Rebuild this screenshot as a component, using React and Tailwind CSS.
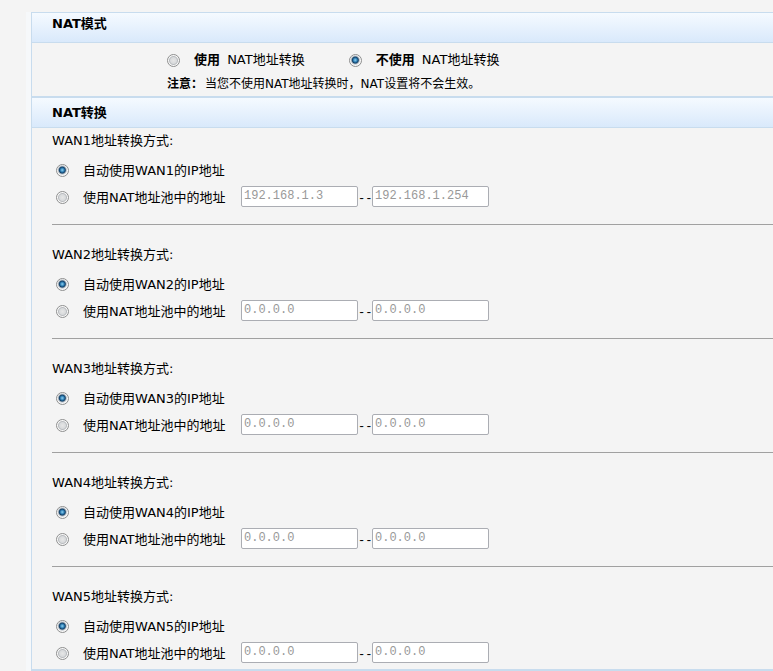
import React, { useState } from "react";

const wans = [
  { id: 1, from: "192.168.1.3", to: "192.168.1.254" },
  { id: 2, from: "0.0.0.0", to: "0.0.0.0" },
  { id: 3, from: "0.0.0.0", to: "0.0.0.0" },
  { id: 4, from: "0.0.0.0", to: "0.0.0.0" },
  { id: 5, from: "0.0.0.0", to: "0.0.0.0" },
];

function Radio(props) {
  return (
    <input
      type="radio"
      className="h-[13px] w-[13px] shrink-0 appearance-none rounded-full border border-[#8e8f8f] bg-[radial-gradient(circle,#e6e6e6_0,#d8dadc_3px,#b9bcbf_4px,#f8f8f8_5px)] bg-no-repeat checked:bg-[radial-gradient(circle_at_48%_46%,#8fd3f2_0,#2b7ab0_2px,#123f66_3px,#b4bcc4_4px,#f8f8f8_5px)]"
      {...props}
    />
  );
}

function AddressInput({ label, defaultValue, disabled }) {
  return (
    <input
      type="text"
      aria-label={label}
      defaultValue={defaultValue}
      disabled={disabled}
      className="mt-0.5 h-[21px] w-[117px] self-start rounded-xs border border-[#abadb3] bg-white px-[2px] pb-[2px] font-['Liberation_Mono','Noto_Sans_CJK_SC',monospace] text-[12px] leading-4 text-[#222] disabled:text-[#999]"
    />
  );
}

function WanSection({ wan, first, last }) {
  const [mode, setMode] = useState("auto");
  const name = `wan${wan.id}`;
  return (
    <div
      role="radiogroup"
      aria-labelledby={`${name}-title`}
      className={`${first ? "pt-px" : "pt-[18px]"} ${last ? "pb-[2px]" : "border-b border-[#a0a0a0] pb-[13px]"}`}
    >
      <p id={`${name}-title`} className="mb-1 h-6 leading-6">{`WAN${wan.id}地址转换方式:`}</p>
      <label className="flex h-[27px] w-fit items-center gap-[14px] pl-1">
        <Radio name={name} checked={mode === "auto"} onChange={() => setMode("auto")} />
        {`自动使用WAN${wan.id}的IP地址`}
      </label>
      <div className="flex h-[27px] items-center">
        <label className="flex w-[189px] shrink-0 items-center gap-[14px] whitespace-nowrap pl-1">
          <Radio name={name} checked={mode === "pool"} onChange={() => setMode("pool")} />
          使用NAT地址池中的地址
        </label>
        <AddressInput label="起始地址" defaultValue={wan.from} disabled={mode === "auto"} />
        <span className="w-[14px] whitespace-nowrap pt-[2px] text-center font-['Liberation_Mono',monospace] text-[12px]">--</span>
        <AddressInput label="结束地址" defaultValue={wan.to} disabled={mode === "auto"} />
      </div>
    </div>
  );
}

export default function App() {
  const [nat, setNat] = useState("off");
  return (
    <div className="min-h-screen bg-[#f4f4f4] pl-[31px] pt-3 font-['DejaVu_Sans','Noto_Sans_CJK_SC',sans-serif] text-[13px] text-black">
      <main className="border-b-2 border-l border-[#c8dcee] shadow-[-5px_0_0_#f6f8fa]">
        <section>
          <h2 className="h-[31px] border-y border-[#c8dcee] bg-linear-to-b from-[#f5faff] to-[#d9e9fb] pl-5 font-bold leading-[22px]">
            NAT模式
          </h2>
          <div className="flex flex-col items-start pb-[2px] pl-[135px] pt-[5px]">
            <div className="mb-[2px] flex h-6 items-center gap-[44px] whitespace-nowrap">
              <label className="flex items-center gap-[14px]">
                <Radio name="nat" checked={nat === "on"} onChange={() => setNat("on")} />
                <span><b className="mr-[3px]">使用</b> NAT地址转换</span>
              </label>
              <label className="flex items-center gap-[14px]">
                <Radio name="nat" checked={nat === "off"} onChange={() => setNat("off")} />
                <span><b className="mr-[3px]">不使用</b> NAT地址转换</span>
              </label>
            </div>
            <p className="h-5 whitespace-nowrap text-[12px] leading-5">
              <b className="mr-[2px]">注意：</b>当您不使用NAT地址转换时，NAT设置将不会生效。
            </p>
          </div>
        </section>
        <section>
          <h2 className="h-8 border-b border-t-2 border-[#c8dcee] bg-linear-to-b from-[#f5faff] to-[#d9e9fb] pl-5 font-bold leading-[29px]">
            NAT转换
          </h2>
          <div className="pl-5">
            {wans.map((wan, i) => (
              <WanSection key={wan.id} wan={wan} first={i === 0} last={i === wans.length - 1} />
            ))}
          </div>
        </section>
      </main>
    </div>
  );
}
